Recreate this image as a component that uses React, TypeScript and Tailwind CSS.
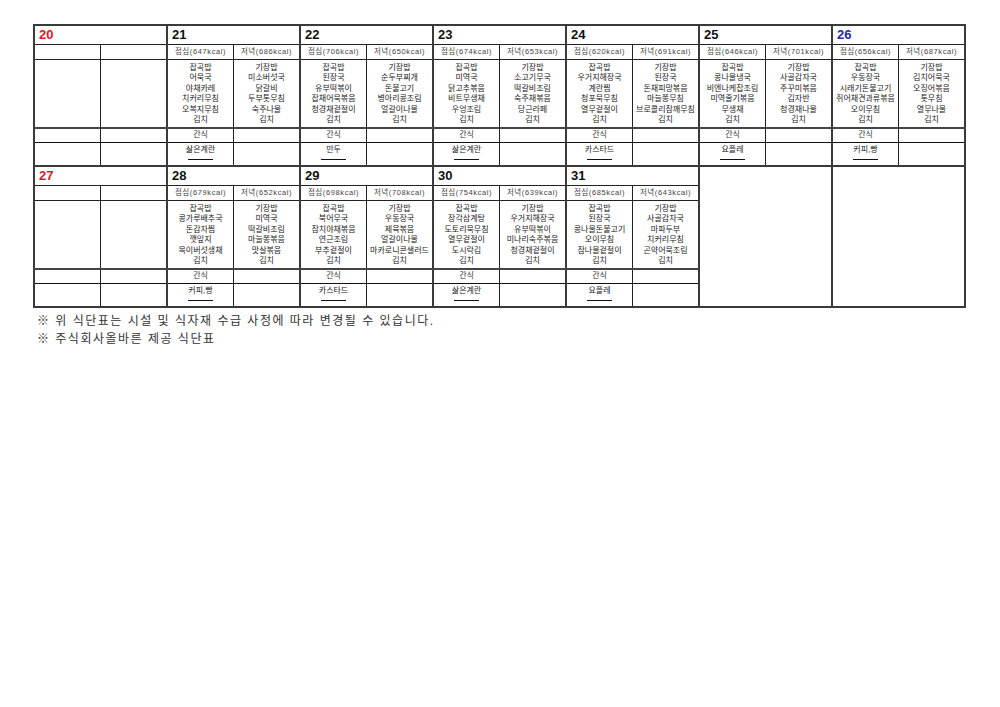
import React from "react";

type Day = {
  date: number;
  color?: string;
  lunch?: { kcal: number; menu: string[] };
  dinner?: { kcal: number; menu: string[] };
  snack?: string;
  empty?: boolean;
};

const WEEK1: Day[] = [
  { date: 20, color: "text-[#e8141b]" },
  {
    date: 21,
    lunch: { kcal: 647, menu: ["잡곡밥", "어묵국", "야채카레", "치커리무침", "오복지무침", "김치"] },
    dinner: { kcal: 686, menu: ["기장밥", "미소버섯국", "닭갈비", "두부톳무침", "숙주나물", "김치"] },
    snack: "삶은계란",
  },
  {
    date: 22,
    lunch: { kcal: 706, menu: ["잡곡밥", "된장국", "유부떡볶이", "잡채어묵볶음", "청경채겉절이", "김치"] },
    dinner: { kcal: 650, menu: ["기장밥", "순두부찌개", "돈불고기", "병아리콩조림", "얼갈이나물", "김치"] },
    snack: "만두",
  },
  {
    date: 23,
    lunch: { kcal: 674, menu: ["잡곡밥", "미역국", "닭고추볶음", "비트무생채", "우엉조림", "김치"] },
    dinner: { kcal: 653, menu: ["기장밥", "소고기무국", "떡갈비조림", "숙주채볶음", "당근라페", "김치"] },
    snack: "삶은계란",
  },
  {
    date: 24,
    lunch: { kcal: 620, menu: ["잡곡밥", "우거지해장국", "계란찜", "청포묵무침", "열무겉절이", "김치"] },
    dinner: { kcal: 691, menu: ["기장밥", "된장국", "돈채피망볶음", "마늘쫑무침", "브로콜리참깨무침", "김치"] },
    snack: "카스타드",
  },
  {
    date: 25,
    lunch: { kcal: 646, menu: ["잡곡밥", "콩나물냉국", "비엔나케찹조림", "미역줄기볶음", "무생채", "김치"] },
    dinner: { kcal: 701, menu: ["기장밥", "사골감자국", "주꾸미볶음", "김자반", "청경채나물", "김치"] },
    snack: "요플레",
  },
  {
    date: 26,
    color: "text-[#1c2ba8]",
    lunch: { kcal: 656, menu: ["잡곡밥", "우동장국", "시래기돈불고기", "쥐어채견과류볶음", "오이무침", "김치"] },
    dinner: { kcal: 687, menu: ["기장밥", "김치어묵국", "오징어볶음", "톳무침", "열무나물", "김치"] },
    snack: "커피,빵",
  },
];

const WEEK2: Day[] = [
  { date: 27, color: "text-[#d0202a]" },
  {
    date: 28,
    lunch: { kcal: 679, menu: ["잡곡밥", "콩가루배추국", "돈감자찜", "깻잎지", "목이버섯생채", "김치"] },
    dinner: { kcal: 652, menu: ["기장밥", "미역국", "떡갈비조림", "마늘쫑볶음", "맛살볶음", "김치"] },
    snack: "커피,빵",
  },
  {
    date: 29,
    lunch: { kcal: 698, menu: ["잡곡밥", "북어무국", "참치야채볶음", "연근조림", "부추겉절이", "김치"] },
    dinner: { kcal: 708, menu: ["기장밥", "우동장국", "제육볶음", "얼갈이나물", "마카로니콘샐러드", "김치"] },
    snack: "카스타드",
  },
  {
    date: 30,
    lunch: { kcal: 754, menu: ["잡곡밥", "장각삼계탕", "도토리묵무침", "열무겉절이", "도시락김", "김치"] },
    dinner: { kcal: 639, menu: ["기장밥", "우거지해장국", "유부떡볶이", "미나리숙주볶음", "청경채겉절이", "김치"] },
    snack: "삶은계란",
  },
  {
    date: 31,
    lunch: { kcal: 685, menu: ["잡곡밥", "된장국", "콩나물돈불고기", "오이무침", "참나물겉절이", "김치"] },
    dinner: { kcal: 643, menu: ["기장밥", "사골감자국", "마파두부", "치커리무침", "곤약어묵조림", "김치"] },
    snack: "요플레",
  },
  { date: 0, empty: true },
  { date: 0, empty: true },
];

const L = "border-l-2 border-l-[#3a3a3a]";
const R = "border-r border-r-[#222]";

function Week({ days }: { days: Day[] }) {
  return (
    <>
      <tr className="h-[19px]">
        {days.map((d, i) =>
          d.empty ? (
            <td key={i} colSpan={2} rowSpan={5} className={`${L} border-t-2 border-t-[#3a3a3a] border-b-2 border-b-[#3a3a3a]`} />
          ) : (
            <td
              key={i}
              colSpan={2}
              className={`${L} border-t-2 border-t-[#3a3a3a] border-b border-b-[#222] px-[4px] text-[13px] font-bold leading-none ${d.color ?? "text-[#111]"}`}
            >
              {d.date}
            </td>
          )
        )}
      </tr>
      <tr className="h-[15px]">
        {days.map((d, i) =>
          d.empty ? null : (
            <React.Fragment key={i}>
              <td className={`${L} ${R} border-b border-b-[#222] text-center text-[7.5px] tracking-[0.6px] text-[#444] leading-none whitespace-nowrap`}>
                {d.lunch ? `점심(${d.lunch.kcal}kcal)` : ""}
              </td>
              <td className="border-b border-b-[#222] text-center text-[7.5px] tracking-[0.6px] text-[#444] leading-none whitespace-nowrap">
                {d.dinner ? `저녁(${d.dinner.kcal}kcal)` : ""}
              </td>
            </React.Fragment>
          )
        )}
      </tr>
      <tr className="h-[69px]">
        {days.map((d, i) =>
          d.empty ? null : (
            <React.Fragment key={i}>
              <td className={`${L} ${R} border-b-2 border-b-[#444] align-top pt-[3px] text-center text-[8px] leading-[10.5px] text-[#222] whitespace-nowrap`}>
                {d.lunch?.menu.map((m, j) => <div key={j}>{m}</div>)}
              </td>
              <td className="border-b-2 border-b-[#444] align-top pt-[3px] text-center text-[8px] leading-[10.5px] text-[#222] whitespace-nowrap">
                {d.dinner?.menu.map((m, j) => <div key={j}>{m}</div>)}
              </td>
            </React.Fragment>
          )
        )}
      </tr>
      <tr className="h-[14px]">
        {days.map((d, i) =>
          d.empty ? null : (
            <React.Fragment key={i}>
              <td className={`${L} ${R} border-b border-b-[#111] text-center text-[8px] leading-none text-[#333]`}>
                {d.snack ? "간식" : ""}
              </td>
              <td className="border-b border-b-[#111]" />
            </React.Fragment>
          )
        )}
      </tr>
      <tr className="h-[24px]">
        {days.map((d, i) =>
          d.empty ? null : (
            <React.Fragment key={i}>
              <td className={`${L} ${R} border-b-2 border-b-[#3a3a3a] align-top pt-[3px] text-[8px] leading-none text-[#222]`}>
                {d.snack && (
                  <div className="flex flex-col items-center">
                    <span>{d.snack}</span>
                    <span className="mt-[5px] block h-px w-[25px] bg-[#111]" />
                  </div>
                )}
              </td>
              <td className="border-b-2 border-b-[#3a3a3a]" />
            </React.Fragment>
          )
        )}
      </tr>
    </>
  );
}

export default function App() {
  return (
    <div
      className="min-h-[707px] w-[1000px] bg-white pl-[33px] pt-[24px]"
      style={{ fontFamily: '"Liberation Sans", Arial, "Noto Sans CJK KR", sans-serif' }}
    >
      <table className="w-[931px] table-fixed border-collapse border-r-2 border-r-[#3a3a3a]">
        <colgroup>
          {Array.from({ length: 14 }).map((_, i) => (
            <col key={i} className="w-[66.5px]" />
          ))}
        </colgroup>
        <tbody>
          <Week days={WEEK1} />
          <Week days={WEEK2} />
        </tbody>
      </table>
      <div className="mt-[4px] pl-[4px] text-[12px] leading-[18px] tracking-[1.5px] text-[#333]">
        <p>※ 위 식단표는 시설 및 식자재 수급 사정에 따라 변경될 수 있습니다.</p>
        <p>※ 주식회사올바른 제공 식단표</p>
      </div>
    </div>
  );
}
